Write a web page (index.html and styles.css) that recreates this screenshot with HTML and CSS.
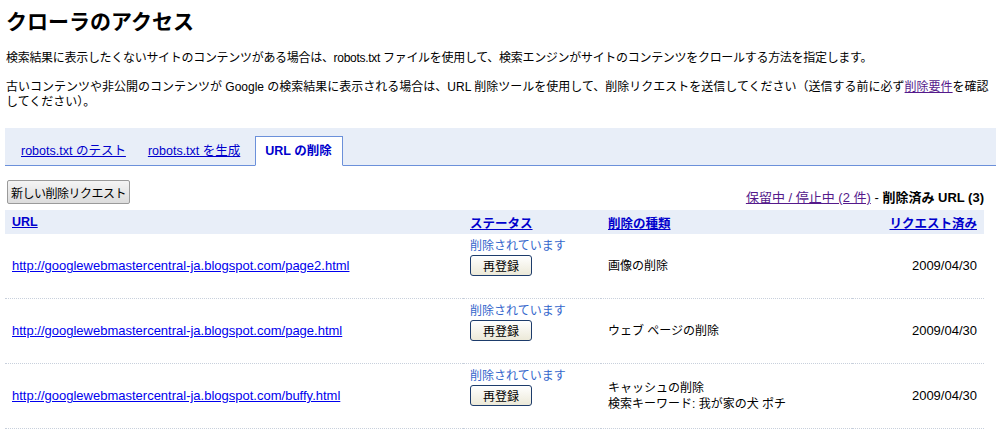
FILE: index.html
```html
<!DOCTYPE html>
<html lang="ja">
<head>
    <meta charset="UTF-8">
    <title>クローラのアクセス</title>
    <link rel="stylesheet" href="styles.css">
</head>
<body>
    <div class="page">
        <h1>クローラのアクセス</h1>
        <p class="intro lead">検索結果に表示したくないサイトのコンテンツがある場合は、robots.txt ファイルを使用して、検索エンジンがサイトのコンテンツをクロールする方法を指定します。</p>
        <p class="intro">古いコンテンツや非公開のコンテンツが Google の検索結果に表示される場合は、URL 削除ツールを使用して、削除リクエストを送信してください（送信する前に必ず<a href="#" class="visited">削除要件</a>を確認してください）。</p>

        <div class="tab-bar">
            <a href="#" class="tab">robots.txt のテスト</a>
            <a href="#" class="tab">robots.txt を生成</a>
            <span class="tab active">URL の削除</span>
        </div>

        <div class="toolbar">
            <button class="gray-btn">新しい削除リクエスト</button>
            <div class="filter">
                <a href="#" class="visited">保留中 / 停止中 (2 件)</a> - <b>削除済み URL (3)</b>
            </div>
        </div>

        <table class="removals">
            <thead>
                <tr>
                    <th class="col-url"><a href="#">URL</a></th>
                    <th class="col-status"><a href="#">ステータス</a></th>
                    <th class="col-type"><a href="#">削除の種類</a></th>
                    <th class="col-date"><a href="#">リクエスト済み</a></th>
                </tr>
            </thead>
            <tbody>
                <tr>
                    <td><a href="#" class="url">http://googlewebmastercentral-ja.blogspot.com/page2.html</a></td>
                    <td class="status">
                        <div class="status-text">削除されています</div>
                        <button class="xp-btn">再登録</button>
                    </td>
                    <td>画像の削除</td>
                    <td class="date">2009/04/30</td>
                </tr>
                <tr>
                    <td><a href="#" class="url">http://googlewebmastercentral-ja.blogspot.com/page.html</a></td>
                    <td class="status">
                        <div class="status-text">削除されています</div>
                        <button class="xp-btn">再登録</button>
                    </td>
                    <td>ウェブ ページの削除</td>
                    <td class="date">2009/04/30</td>
                </tr>
                <tr>
                    <td><a href="#" class="url">http://googlewebmastercentral-ja.blogspot.com/buffy.html</a></td>
                    <td class="status">
                        <div class="status-text">削除されています</div>
                        <button class="xp-btn">再登録</button>
                    </td>
                    <td>キャッシュの削除<br>検索キーワード: 我が家の犬 ポチ</td>
                    <td class="date">2009/04/30</td>
                </tr>
            </tbody>
        </table>
    </div>
</body>
</html>
```

FILE: styles.css
```css
body {
    margin: 0;
    padding: 0;
    background: white;
    color: black;
    font-family: "Liberation Sans", Arial, "Noto Sans CJK JP", sans-serif;
    font-size: 12px;
}
.page {
    padding: 0 8px 0 5px;
}
h1 {
    margin: 9px 0 0 1px;
    font-size: 21px;
    line-height: 26px;
}
.intro {
    margin: 14px 0 0 1px;
    line-height: 15px;
}
.lead {
    margin-top: 16px;
    letter-spacing: -0.3px;
}
a {
    color: #0000cc;
}
a.visited {
    color: #551a8b;
}
.tab-bar {
    display: flex;
    align-items: flex-end;
    height: 37px;
    margin-top: 18px;
    padding-left: 6px;
    background: #e8eef8;
    border-bottom: 1px solid #6b90da;
}
.tab {
    padding: 0 10px;
    margin-right: 2px;
    line-height: 28px;
    font-size: 12.5px;
}
.tab.active {
    margin: 0 0 -1px 3px;
    padding: 0 10px 0 9px;
    background: white;
    border: 1px solid #6b90da;
    border-bottom: 1px solid white;
    color: #0000cc;
    font-weight: bold;
}
.toolbar {
    display: flex;
    justify-content: space-between;
    align-items: flex-end;
    margin: 14px 12px 6px 2px;
}
.gray-btn {
    height: 24px;
    padding: 0 3px;
    font-family: inherit;
    font-size: 12px;
    letter-spacing: -0.5px;
    background: linear-gradient(#f4f4f4, #dcdcdc);
    border: 1px solid #9a9a9a;
    border-radius: 2px;
}
.filter {
    font-size: 13px;
    line-height: 14px;
    margin-bottom: -1px;
}
.removals {
    width: 979px;
    border-collapse: collapse;
}
.removals th {
    height: 24px;
    padding: 0 7px;
    background: #e8eef8;
    text-align: left;
    font-size: 12.5px;
}
.removals th.col-date {
    text-align: right;
}
.col-url {
    width: 444px;
}
.col-status {
    width: 124px;
}
.removals td {
    height: 64px;
    padding: 0 7px;
    border-bottom: 1px dotted #c8d0dc;
    vertical-align: middle;
    line-height: 16px;
}
.removals td.status {
    height: 60px;
    vertical-align: top;
    padding-top: 4px;
}
.url {
    color: #0000ee;
    font-size: 13px;
}
.status-text {
    color: #3366cc;
    line-height: 16px;
}
.xp-btn {
    width: 62px;
    height: 21px;
    margin-top: 1px;
    padding: 0;
    font-family: inherit;
    font-size: 12px;
    background: linear-gradient(#ffffff, #ece9d8);
    border: 1px solid #1d3c6b;
    border-radius: 3px;
}
.date {
    text-align: right;
    font-size: 13px;
}
```
